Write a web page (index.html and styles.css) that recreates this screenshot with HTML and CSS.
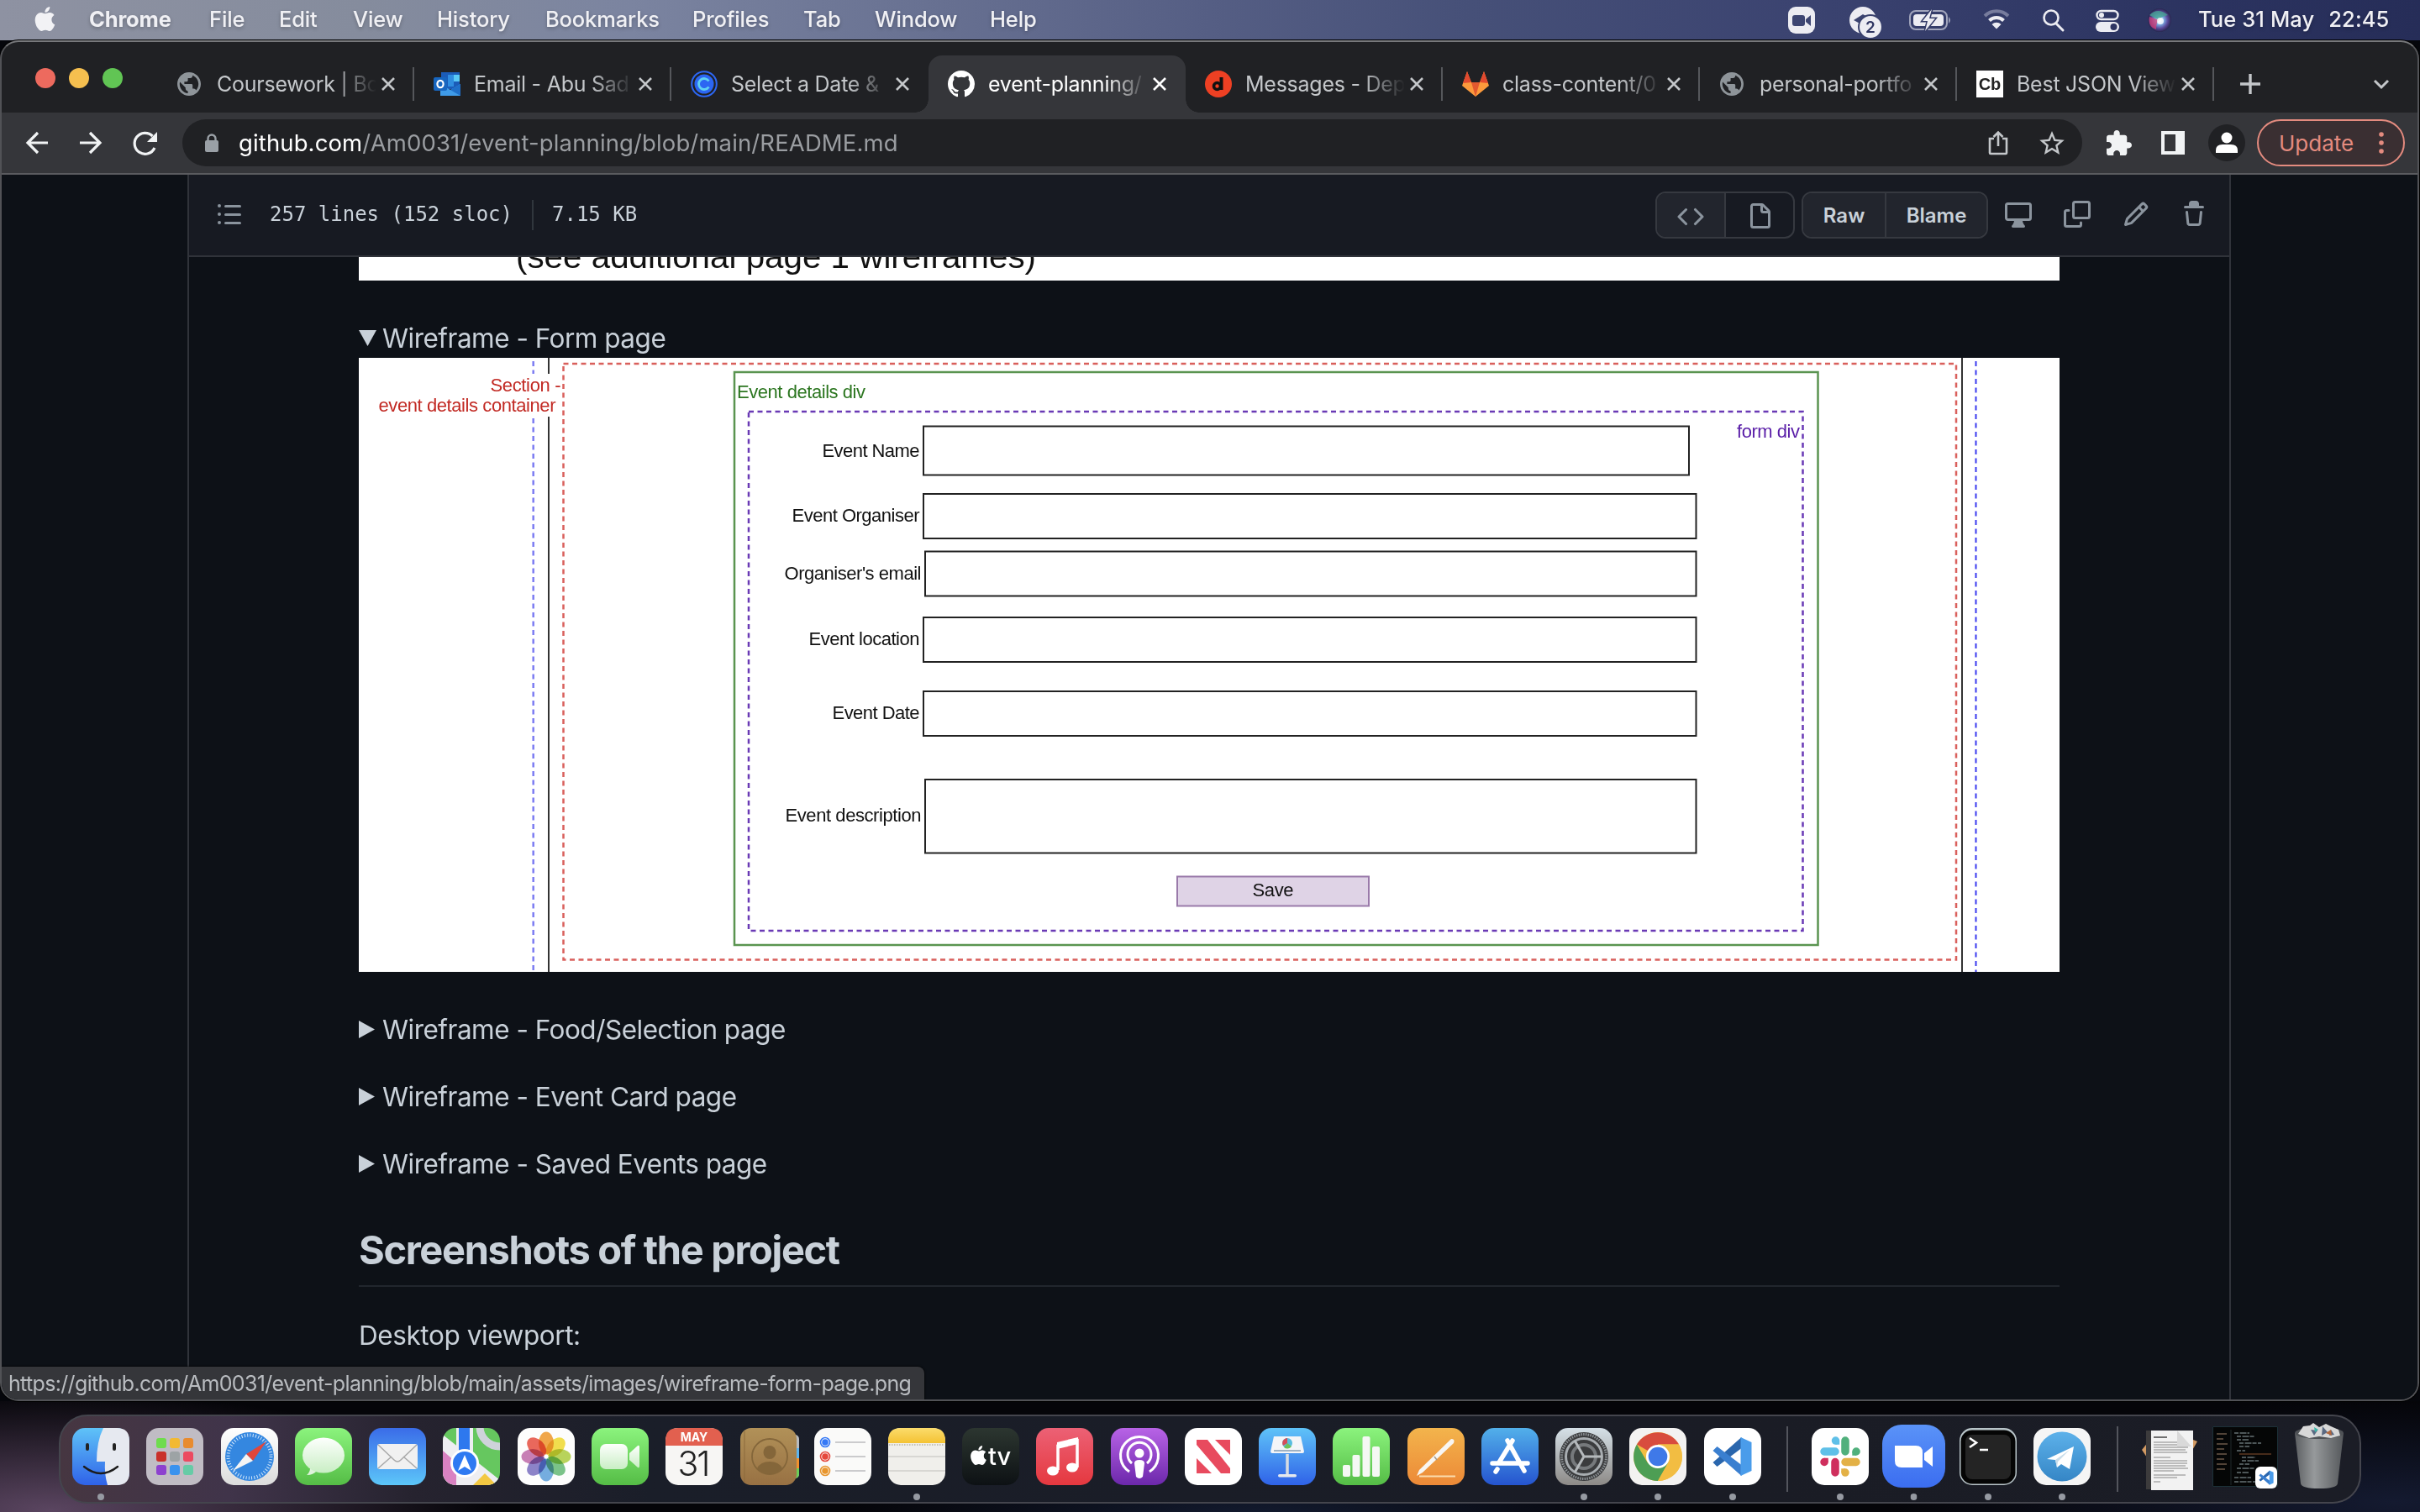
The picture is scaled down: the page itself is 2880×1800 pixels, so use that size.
FILE: index.html
```html
<!DOCTYPE html>
<html lang="en">
<head>
<meta charset="utf-8">
<title>event-planning/README.md</title>
<link rel="stylesheet" href="styles.css">
</head>
<body>
<svg width="0" height="0" class="defs">
  <defs>
    <linearGradient id="green" x2="0" y2="1"><stop stop-color="#8bf37d"/><stop offset="1" stop-color="#55bd46"/></linearGradient>
    <linearGradient id="mail" x2="0" y2="1"><stop stop-color="#3a6ce8"/><stop offset="1" stop-color="#5cc6f9"/></linearGradient>
    <linearGradient id="sky" x2="0" y2="1"><stop stop-color="#5fc3f8"/><stop offset="1" stop-color="#2f62e8"/></linearGradient>
    <linearGradient id="store" x2="0" y2="1"><stop stop-color="#52b0ea"/><stop offset="1" stop-color="#2554cf"/></linearGradient>
    <linearGradient id="paper" x2="0" y2="1"><stop stop-color="#fff"/><stop offset="1" stop-color="#dcdcdc"/></linearGradient>
    <linearGradient id="bubble" x2="0" y2="1"><stop stop-color="#fdfffd"/><stop offset="1" stop-color="#c9eec4"/></linearGradient>
    <linearGradient id="music" x2="0" y2="1"><stop stop-color="#ec6175"/><stop offset="1" stop-color="#e5383f"/></linearGradient>
    <linearGradient id="pod" x2="0" y2="1"><stop stop-color="#b863e6"/><stop offset="1" stop-color="#6c28ab"/></linearGradient>
    <linearGradient id="page" x2="0" y2="1"><stop stop-color="#f3b44c"/><stop offset="1" stop-color="#ec8937"/></linearGradient>
    <linearGradient id="book" x2="0" y2="1"><stop stop-color="#b19158"/><stop offset="1" stop-color="#987143"/></linearGradient>
    <linearGradient id="gearbg" x2="0" y2="1"><stop stop-color="#d5e0e7"/><stop offset="1" stop-color="#8d8a87"/></linearGradient>
    <linearGradient id="tvbg" x2="0" y2="1"><stop stop-color="#2c3630"/><stop offset="1" stop-color="#0d1114"/></linearGradient>
    <linearGradient id="zoombg" x2="0" y2="1"><stop stop-color="#5a93f8"/><stop offset="1" stop-color="#3b6df0"/></linearGradient>
    <linearGradient id="tele" x2="0" y2="1"><stop stop-color="#5db1ea"/><stop offset="1" stop-color="#3586c6"/></linearGradient>
    <linearGradient id="notes" x2="0" y2="1"><stop stop-color="#fbdc6c"/><stop offset="1" stop-color="#f4c233"/></linearGradient>
    <linearGradient id="bin"><stop stop-color="#5c5f62"/><stop offset=".4" stop-color="#96999b"/><stop offset="1" stop-color="#55585b"/></linearGradient>
    <radialGradient id="siri"><stop stop-color="#fff"/><stop offset=".35" stop-color="#7fb4e8"/><stop offset=".7" stop-color="#5a4a9a"/><stop offset="1" stop-color="#28264f"/></radialGradient>
    <symbol id="apple" viewBox="0 0 24 24"><path d="M12.152 6.896c-.948 0-2.415-1.078-3.96-1.04-2.04.027-3.91 1.183-4.961 3.014-2.117 3.675-.546 9.103 1.519 12.09 1.013 1.454 2.208 3.09 3.792 3.039 1.52-.065 2.09-.987 3.935-.987 1.831 0 2.35.987 3.96.948 1.637-.026 2.676-1.48 3.676-2.948 1.156-1.688 1.636-3.325 1.662-3.415-.039-.013-3.182-1.221-3.22-4.857-.026-3.04 2.48-4.494 2.597-4.559-1.429-2.09-3.623-2.324-4.39-2.376-2-.156-3.675 1.09-4.61 1.09zM15.53 3.83c.843-1.012 1.4-2.427 1.245-3.83-1.207.052-2.662.805-3.532 1.818-.78.896-1.454 2.338-1.273 3.714 1.338.104 2.715-.688 3.559-1.701"/></symbol>
    <symbol id="globe" viewBox="2 2 20 20"><path fill="#8e9499" d="M12 2C6.48 2 2 6.48 2 12s4.48 10 10 10 10-4.48 10-10S17.52 2 12 2zm-1 17.93c-3.95-.49-7-3.85-7-7.93 0-.62.08-1.21.21-1.79L9 15v1c0 1.1.9 2 2 2v1.93zm6.9-2.54c-.26-.81-1-1.39-1.9-1.39h-1v-3c0-.55-.45-1-1-1H8v-2h2c.55 0 1-.45 1-1V7h2c1.1 0 2-.9 2-2v-.41c2.93 1.19 5 4.06 5 7.41 0 2.08-.8 3.97-2.1 5.39z"/></symbol>
    <symbol id="x" viewBox="0 0 18 18"><path d="M2 2l14 14M16 2L2 16" stroke="currentColor" stroke-width="2.6" fill="none"/></symbol>
    <symbol id="vs" viewBox="0 0 48 48"><path d="M1 31l5 5 29-22V1z" fill="#2a66ad"/><path d="M1 17l5-5 29 22v13z" fill="#3a7fd0"/><path d="M34 1l13 6v34l-13 6z" fill="#4a9cea"/></symbol>
    <symbol id="dot" viewBox="0 0 8 8"><circle cx="4" cy="4" r="4" fill="#969aa2"/></symbol>
  </defs>
</svg>

<header class="menubar">
  <svg class="apple" fill="#f2f2f5"><use href="#apple"/></svg>
  <nav class="menus">
    <span class="app">Chrome</span><span>File</span><span>Edit</span><span>View</span><span>History</span><span>Bookmarks</span><span>Profiles</span><span>Tab</span><span>Window</span><span>Help</span>
  </nav>
  <svg class="tray" viewBox="2110 0 490 48" fill="#ececf2">
    <rect x="2128" y="8" width="32" height="32" rx="9"/><rect x="2133" y="18" width="15" height="13" rx="3" fill="#3d4572"/><path d="M2149 23l6-5v13l-6-5z" fill="#3d4572"/>
    <circle cx="2217" cy="24" r="16"/><path d="M2206 24l11-7 14 8-14 5z" fill="#3b4370"/><circle cx="2226" cy="32" r="14" stroke="#38406d" stroke-width="2"/><text x="2226" y="39" text-anchor="middle" class="badge">2</text>
    <rect x="2273" y="13" width="44" height="22" rx="7" fill="none" stroke="#a0a4bb" stroke-width="2"/><rect x="2277" y="17" width="36" height="14" rx="4"/><path d="M2319 20q4 4 0 8z" fill="#a0a4bb"/><path d="M2299 11l-11 14h6l-3 12 12-15h-7z" stroke="#353c69" stroke-width="3" paint-order="stroke"/>
    <g fill="none" stroke="#ececf2" stroke-width="4"><path d="M2362 19a20 20 0 0128 0" stroke="#777c9d"/><path d="M2367.500 24.500a12 12 0 0117 0"/></g><path d="M2370.500 29a8 8 0 0111 0l-5.500 5.500z"/>
    <circle cx="2441" cy="21" r="8.500" fill="none" stroke="#ececf2" stroke-width="2.600"/><path d="M2447 28l8 8" stroke="#ececf2" stroke-width="3" stroke-linecap="round"/>
    <rect x="2495.500" y="13" width="25" height="10" rx="5" fill="none" stroke="#ececf2" stroke-width="2.400"/><circle cx="2501" cy="18" r="3"/><rect x="2494" y="26" width="28" height="12" rx="6"/><circle cx="2515.500" cy="32" r="4" fill="#2e3562"/>
    <circle cx="2570" cy="24" r="14" fill="url(#siri)"/><path d="M2558 18q10-10 22 0-10 2-10 6z" fill="#45a392" opacity=".8"/><path d="M2558 20q-2 12 8 15 0-10 4-11z" fill="#d23f77" opacity=".75"/><circle cx="2571" cy="25" r="4" fill="#fff" opacity=".8"/>
  </svg>
  <div class="clock"><span>Tue 31 May</span><span>22:45</span></div>
</header>

<main class="window">
  <div class="tabstrip">
    <div class="lights"><i class="red"></i><i class="amber"></i><i class="lime"></i></div>
    <div class="tab"><svg class="fav"><use href="#globe" x="1" y="2" width="28" height="28"/></svg><span class="title">Coursework | Bo</span><svg class="close"><use href="#x"/></svg></div>
    <div class="tab"><svg class="fav" viewBox="0 0 32 32"><path d="M9 2h22v20H9z" fill="#1b5cb8"/><path d="M17 5h7v7h-7zM17 12h7v7h-7z" fill="#2f8de0"/><path d="M24 5h7v8h-7z" fill="#59c9f5"/><path d="M8 16l12 7 12-7v14H8z" fill="#3f9be8"/><path d="M32 16v14L20 23z" fill="#1f6fc8"/><rect y="8" width="16" height="16" rx="2" fill="#1766c0"/><ellipse cx="8" cy="16" rx="3.600" ry="4.200" fill="none" stroke="#fff" stroke-width="2.200"/></svg><span class="title">Email - Abu Sad</span><svg class="close"><use href="#x"/></svg></div>
    <div class="tab last"><svg class="fav" viewBox="0 0 32 32"><circle cx="16" cy="16" r="14.800" fill="none" stroke="#2c66f2" stroke-width="2"/><circle cx="16" cy="16" r="11.500" fill="#2c66f2"/><path d="M21.500 12.500a6.500 6.500 0 100 7" stroke="#5fd0f2" stroke-width="2.800" fill="none"/></svg><span class="title">Select a Date &amp;</span><svg class="close"><use href="#x"/></svg></div>
    <div class="tab active"><svg class="fav" viewBox="0 0 16 16"><path fill="#fff" d="M8 0C3.580 0 0 3.580 0 8c0 3.540 2.290 6.530 5.470 7.590.4.070.55-.17.55-.38 0-.19-.01-.82-.01-1.490-2.010.37-2.530-.49-2.690-.94-.09-.23-.48-.94-.82-1.130-.28-.15-.68-.52-.01-.53.63-.01 1.080.58 1.230.82.72 1.210 1.870.87 2.330.66.070-.52.280-.87.510-1.070-1.780-.2-3.640-.89-3.640-3.950 0-.87.310-1.590.82-2.150-.08-.2-.36-1.020.08-2.120 0 0 .67-.21 2.200.82.640-.18 1.320-.27 2-.27.68 0 1.360.09 2 .27 1.530-1.040 2.200-.82 2.200-.82.440 1.100.160 1.920.080 2.120.510.560.82 1.270.82 2.150 0 3.070-1.870 3.750-3.650 3.950.290.250.540.730.540 1.480 0 1.070-.01 1.930-.01 2.200 0 .210.150.460.550.380A8.013 8.013 0 0016 8c0-4.420-3.580-8-8-8z"/></svg><span class="title">event-planning/</span><svg class="close"><use href="#x"/></svg></div>
    <div class="tab"><svg class="fav" viewBox="0 0 32 32"><circle cx="16" cy="16" r="16" fill="#ee4023"/><circle cx="14.500" cy="18.500" r="4" fill="none" stroke="#111" stroke-width="3.600"/><path d="M19.500 8v15" stroke="#111" stroke-width="4"/></svg><span class="title">Messages - Dep</span><svg class="close"><use href="#x"/></svg></div>
    <div class="tab"><svg class="fav" viewBox="0 0 32 32"><path d="M16 31L0 18 6 1l5 13h10l5-13 6 17z" fill="#fc9a3c"/><path d="M1 15L6 1l5 13zM31 15L26 1l-5 13z" fill="#e2492f"/><path d="M11 14h10l-5 17z" fill="#e2592f"/></svg><span class="title">class-content/0</span><svg class="close"><use href="#x"/></svg></div>
    <div class="tab"><svg class="fav"><use href="#globe" x="1" y="2" width="28" height="28"/></svg><span class="title">personal-portfo</span><svg class="close"><use href="#x"/></svg></div>
    <div class="tab"><svg class="fav" viewBox="0 0 32 32"><path d="M0 0h32v32H0z" fill="#fff"/><text x="16" y="23" text-anchor="middle" class="cb">Cb</text></svg><span class="title">Best JSON View</span><svg class="close"><use href="#x"/></svg></div>
    <svg class="plus" viewBox="0 0 26 26"><path d="M13 1v24M1 13h24" stroke="#c4c7ca" stroke-width="3.400"/></svg>
    <svg class="chev" viewBox="0 0 20 14"><path d="M2 2l8 8 8-8" stroke="#c4c7ca" stroke-width="3" fill="none"/></svg>
  </div>

  <div class="toolbar">
    <svg class="navs" viewBox="20 142 180 56" fill="none" stroke="#f1f3f4" stroke-width="3.200"><path d="M57 170H33m12-12l-12 12 12 12M95 170h24m-12-12l12 12-12 12"/><path d="M184 176a12.500 12.500 0 11-2.500-14"/><path d="M187 157v12h-12z" fill="#f1f3f4" stroke="none"/></svg>
    <div class="omni">
      <svg class="lock" viewBox="0 0 16 22"><rect y="8" width="16" height="14" rx="2" fill="#9aa0a6"/><path d="M3.500 9V6a4.500 4.500 0 019 0v3" fill="none" stroke="#9aa0a6" stroke-width="2.400"/></svg>
      <span class="url"><b>github.com</b>/Am0031/event-planning/blob/main/README.md</span>
      <svg class="share" viewBox="0 0 24 30" fill="none" stroke="#c4c7ca" stroke-width="2.600"><path d="M7 10H2v17q0 1 1 1h18q1 0 1-1V10h-5M12 19V3M6.500 8L12 2.500 17.500 8"/></svg>
      <svg class="star" viewBox="2 2 20 19"><path fill="#c4c7ca" d="M22 9.240l-7.190-.62L12 2 9.190 8.630 2 9.240l5.460 4.730L5.820 21 12 17.270 18.180 21l-1.630-7.030L22 9.240zM12 15.400l-3.760 2.270 1-4.280-3.320-2.880 4.380-.38L12 6.100l1.710 4.040 4.380.38-3.320 2.880 1 4.280L12 15.400z"/></svg>
    </div>
    <svg class="ext" viewBox="2 1 21 21"><path fill="#f1f3f4" d="M20.500 11H19V7c0-1.100-.9-2-2-2h-4V3.500C13 2.120 11.880 1 10.500 1S8 2.120 8 3.500V5H4c-1.100 0-1.990.9-1.990 2v3.800H3.500c1.490 0 2.700 1.210 2.700 2.700s-1.210 2.700-2.700 2.700H2V20c0 1.100.9 2 2 2h3.800v-1.500c0-1.490 1.210-2.700 2.700-2.700 1.490 0 2.700 1.210 2.700 2.700V22H17c1.100 0 2-.9 2-2v-4h1.500c1.380 0 2.500-1.120 2.500-2.500S21.880 11 20.500 11z"/></svg>
    <svg class="side" viewBox="0 0 28 28"><path fill="#f1f3f4" fill-rule="evenodd" d="M0 0h28v28H0zM4 4v20h13V4z"/></svg>
    <svg class="me" viewBox="0 0 44 44"><circle cx="22" cy="22" r="22" fill="#202124"/><circle cx="22" cy="16" r="6.500" fill="#fff"/><path d="M9 34v-3q0-7 8-7h10q8 0 8 7v3z" fill="#fff"/></svg>
    <div class="update"><span>Update</span><svg viewBox="0 0 6 28" fill="#e48b7f"><circle cx="3" cy="4" r="2.800"/><circle cx="3" cy="14" r="2.800"/><circle cx="3" cy="24" r="2.800"/></svg></div>
  </div>

  <div class="viewport">
    <section class="filebox">
      <div class="filehead">
        <svg class="oct list" viewBox="0 0 16 16"><path d="M2 4a1 1 0 100-2 1 1 0 000 2zm3.750-1.500a.75.75 0 000 1.500h8.500a.75.75 0 000-1.500h-8.500zm0 5a.75.75 0 000 1.500h8.500a.75.75 0 000-1.500h-8.500zm0 5a.75.75 0 000 1.500h8.500a.75.75 0 000-1.500h-8.500zM3 8a1 1 0 11-2 0 1 1 0 012 0zm-1 6a1 1 0 100-2 1 1 0 000 2z"/></svg>
        <div class="meta"><span>257 lines (152 sloc)</span><i></i><span>7.15 KB</span></div>
        <div class="btns view"><span class="on"><svg class="oct" viewBox="0 0 16 16"><path d="M4.720 3.220a.75.75 0 011.060 1.060L2.060 8l3.720 3.720a.75.75 0 11-1.060 1.060L.47 8.530a.75.75 0 010-1.060l4.250-4.250zm6.560 0a.75.75 0 10-1.060 1.060L13.940 8l-3.720 3.720a.75.75 0 101.060 1.060l4.250-4.250a.75.75 0 000-1.060l-4.250-4.250z"/></svg></span><span><svg class="oct" viewBox="0 0 16 16"><path d="M3.750 1.500a.25.25 0 00-.25.25v11.500c0 .138.112.25.25.25h8.500a.25.25 0 00.25-.25V6H9.750A1.750 1.750 0 018 4.250V1.500H3.750zm5.750.56v2.190c0 .138.112.25.25.25h2.190L9.500 2.060zM2 1.750C2 .784 2.784 0 3.750 0h5.086c.464 0 .909.184 1.237.513l3.414 3.414c.329.328.513.773.513 1.237v8.086A1.750 1.750 0 0112.250 15h-8.500A1.750 1.750 0 012 13.250V1.750z"/></svg></span></div>
        <div class="btns raw"><span>Raw</span><span>Blame</span></div>
        <div class="acts">
          <svg class="oct" viewBox="0 0 16 16"><path d="M1.750 2.500h12.500a.25.25 0 01.25.25v7.500a.25.25 0 01-.25.25H1.750a.25.25 0 01-.25-.25v-7.500a.25.25 0 01.25-.25zM14.250 1H1.750A1.750 1.750 0 000 2.750v7.500C0 11.216.784 12 1.750 12h3.727c-.1 1.041-.52 1.872-1.292 2.757A.75.75 0 004.750 16h6.500a.75.75 0 00.565-1.243c-.772-.885-1.193-1.716-1.292-2.757h3.727A1.750 1.750 0 0016 10.250v-7.500A1.750 1.750 0 0014.250 1zM9.018 12H6.982a5.720 5.720 0 01-.765 2.500h3.566a5.720 5.720 0 01-.765-2.500z"/></svg>
          <svg class="oct" viewBox="0 0 16 16"><g fill="none" stroke="#8b949e" stroke-width="1.500" stroke-linecap="round"><rect x="5.750" y=".75" width="9.500" height="9.500" rx="1"/><path d="M3 5.750H1.750a1 1 0 00-1 1v7.500a1 1 0 001 1h7.500a1 1 0 001-1V13"/></g></svg>
          <svg class="oct" viewBox="0 0 16 16"><path d="M11.013 1.427a1.750 1.750 0 012.474 0l1.086 1.086a1.750 1.750 0 010 2.474l-8.610 8.610c-.21.21-.47.364-.756.445l-3.251.93a.75.75 0 01-.927-.928l.929-3.250a1.750 1.750 0 01.445-.758l8.610-8.610zm1.414 1.060a.25.25 0 00-.354 0L10.811 3.750l1.439 1.440 1.263-1.263a.25.25 0 000-.354l-1.086-1.086zM11.189 6.250L9.750 4.810l-6.286 6.287a.25.25 0 00-.064.108l-.558 1.953 1.953-.558a.249.249 0 00.108-.064l6.286-6.286z"/></svg>
          <svg class="oct" viewBox="0 0 16 16"><path d="M6.500 1.750a.25.25 0 01.25-.25h2.500a.25.25 0 01.25.25V3h-3V1.750zm4.500 0V3h2.250a.75.75 0 010 1.500H2.750a.75.75 0 010-1.500H5V1.750C5 .784 5.784 0 6.750 0h2.500C10.216 0 11 .784 11 1.750zM4.496 6.675a.75.75 0 10-1.492.15l.66 6.600A1.750 1.750 0 005.405 15h5.190c.9 0 1.652-.681 1.741-1.576l.66-6.600a.75.75 0 00-1.492-.149l-.66 6.600a.25.25 0 01-.249.225h-5.190a.25.25 0 01-.249-.225l-.66-6.600z"/></svg>
        </div>
      </div>
      <article class="readme">
        <svg class="strip" viewBox="427 306 2024 28"><text x="614" y="319" font-size="39" textLength="619" lengthAdjust="spacingAndGlyphs" fill="#111">(see additional page 1 wireframes)</text></svg>
        <div class="summary open"><svg viewBox="0 0 21 19"><path d="M0 0h21L10.500 19z"/></svg><span>Wireframe - Form page</span></div>
        <svg class="wire" viewBox="427 426 2024 731" font-size="22">
          <g fill="none" stroke-width="2">
            <path d="M634.700 430V445M634.700 498V1157" stroke="#7d7df2" stroke-width="2.500" stroke-dasharray="6 4.500"/>
            <path d="M2351.500 430V1157" stroke="#3a3af0" stroke-dasharray="6 4.500"/>
            <path d="M653 426V445M653 496V1157M2335 426V1157" stroke="#333"/>
            <rect x="670.500" y="433" width="1657.500" height="709.500" stroke="#d9605c" stroke-width="2.500" stroke-dasharray="6 4.500"/>
            <rect x="874" y="443" width="1289.500" height="682" stroke="#5a9450" stroke-width="2.500"/>
            <rect x="891" y="490" width="1254.500" height="618" stroke="#6a3ab5" stroke-width="2.500" stroke-dasharray="6 4.500"/>
            <g stroke="#222"><rect x="1099" y="507.500" width="911" height="58"/><rect x="1099" y="588" width="919.500" height="53"/><rect x="1101" y="656.500" width="917.500" height="53"/><rect x="1099" y="735" width="919.500" height="53"/><rect x="1099" y="823" width="919.500" height="53"/><rect x="1101" y="928" width="917.500" height="87.500"/></g>
            <rect x="1401" y="1043.500" width="228" height="35" fill="#dfd3e6" stroke="#9a7aaa"/>
          </g>
          <g fill="#c22a24"><text x="583.500" y="465.500" textLength="84">Section -</text><text x="450.500" y="489.500" textLength="211">event details container</text></g>
          <text x="877" y="474" textLength="153" fill="#2c7620">Event details div</text>
          <text x="2067" y="521" textLength="75" fill="#5a1ea8">form div</text>
          <g fill="#111"><text x="978.500" y="544" textLength="116">Event Name</text><text x="942.500" y="621" textLength="152">Event Organiser</text><text x="933.500" y="689.500" textLength="163">Organiser's email</text><text x="962.500" y="768" textLength="132">Event location</text><text x="990.500" y="855.500" textLength="104">Event Date</text><text x="934.500" y="978" textLength="162">Event description</text><text x="1490.500" y="1067" textLength="49">Save</text></g>
        </svg>
        <div class="summary first"><svg viewBox="0 0 19 21"><path d="M0 0v21l19-10.500z"/></svg><span>Wireframe - Food/Selection page</span></div>
        <div class="summary"><svg viewBox="0 0 19 21"><path d="M0 0v21l19-10.500z"/></svg><span>Wireframe - Event Card page</span></div>
        <div class="summary"><svg viewBox="0 0 19 21"><path d="M0 0v21l19-10.500z"/></svg><span>Wireframe - Saved Events page</span></div>
        <h2>Screenshots of the project</h2>
        <p>Desktop viewport:</p>
      </article>
    </section>
    <div class="status">https://github.com/Am0031/event-planning/blob/main/assets/images/wireframe-form-page.png</div>
  </div>
</main>

<footer class="desk">
  <div class="dock">
    <div class="apps">
      <svg viewBox="0 0 68 68"><rect width="68" height="68" rx="15" fill="url(#sky)"/><path d="M37 0h16q15 0 15 15v38q0 15-15 15H42q-4-13-3-28h-10Q29 16 37 0z" fill="#e6e9f0"/><path d="M18 20v5M50 20v5" stroke="#222" stroke-width="4" stroke-linecap="round"/><path d="M14 46q20 16 40 0" stroke="#1c1c1c" stroke-width="2.400" fill="none" stroke-linecap="round"/><use href="#dot" x="30" y="78" width="8" height="8"/></svg>
      <svg viewBox="0 0 68 68"><rect width="68" height="68" rx="15" fill="#c0bcc4"/><rect x="12" y="12" width="12" height="12" rx="3" fill="#6fdc4e"/><rect x="28" y="12" width="12" height="12" rx="3" fill="#f2b932"/><rect x="44" y="12" width="12" height="12" rx="3" fill="#e88b2f"/><rect x="12" y="28" width="12" height="12" rx="3" fill="#c9302a"/><rect x="28" y="28" width="12" height="12" rx="3" fill="#9da3a5"/><rect x="44" y="28" width="12" height="12" rx="3" fill="#ec4a60"/><rect x="12" y="44" width="12" height="12" rx="3" fill="#8d41cf"/><rect x="28" y="44" width="12" height="12" rx="3" fill="#3a92ee"/><rect x="44" y="44" width="12" height="12" rx="3" fill="#66cba6"/></svg>
      <svg viewBox="0 0 68 68"><rect width="68" height="68" rx="15" fill="url(#paper)"/><circle cx="34" cy="34" r="29" fill="#3487e0"/><circle cx="34" cy="34" r="25.500" fill="none" stroke="#d3e7fb" stroke-width="4" stroke-dasharray="1 2.330"/><path d="M54 16L38 39l-8-8z" fill="#e0463c"/><path d="M14 51l16-20 8 8z" fill="#f4f4f4"/></svg>
      <svg viewBox="0 0 68 68"><rect width="68" height="68" rx="15" fill="url(#green)"/><path d="M18 45q1 7-4 11 8 0 12-5z" fill="#dff3dc"/><ellipse cx="34" cy="32.500" rx="25" ry="21" fill="url(#bubble)"/></svg>
      <svg viewBox="0 0 68 68"><rect width="68" height="68" rx="15" fill="url(#mail)"/><rect x="10" y="19" width="48" height="30" rx="3" fill="#f1f1f1"/><path d="M11 20l19 18q4 4 8 0l19-18M11 48l16-14M57 48L41 34" fill="none" stroke="#a9a9a9" stroke-width="1.500"/></svg>
      <svg viewBox="0 0 68 68"><clipPath id="c"><rect width="68" height="68" rx="15"/></clipPath><g clip-path="url(#c)"><path d="M0 0h68v68H0z" fill="#66c75f"/><path d="M0 8l68 54v6H0z" fill="#eeeef2"/><path d="M0 27l16 14v27H0z" fill="#d982c2"/><path d="M36 68l14-14 14 14z" fill="#f3c842"/><circle cx="68" cy="-2" r="24" fill="none" stroke="#cfd3da" stroke-width="9"/><path d="M16 0h20v30H16z" fill="#eeeef2"/><path d="M19 0h13v30H19z" fill="#2e78ee"/></g><circle cx="26" cy="42" r="17" fill="#fff"/><circle cx="26" cy="42" r="14" fill="#2f7af2"/><path d="M26 32l8 19-8-5-8 5z" fill="#fff"/></svg>
      <svg viewBox="0 0 68 68"><rect width="68" height="68" rx="15" fill="#fdfdfd"/><g opacity=".9" class="petals"><ellipse cx="34" cy="18" rx="9" ry="13.500" fill="#ef9d37"/><ellipse cx="34" cy="18" rx="9" ry="13.500" fill="#f0db3c" transform="rotate(45 34 34)"/><ellipse cx="34" cy="18" rx="9" ry="13.500" fill="#b1cf4a" transform="rotate(90 34 34)"/><ellipse cx="34" cy="18" rx="9" ry="13.500" fill="#6dbd7d" transform="rotate(135 34 34)"/><ellipse cx="34" cy="18" rx="9" ry="13.500" fill="#67a5dc" transform="rotate(180 34 34)"/><ellipse cx="34" cy="18" rx="9" ry="13.500" fill="#8076c3" transform="rotate(225 34 34)"/><ellipse cx="34" cy="18" rx="9" ry="13.500" fill="#c272ae" transform="rotate(270 34 34)"/><ellipse cx="34" cy="18" rx="9" ry="13.500" fill="#e7584b" transform="rotate(315 34 34)"/></g><circle cx="34" cy="34" r="2" fill="#fff"/></svg>
      <svg viewBox="0 0 68 68"><rect width="68" height="68" rx="15" fill="url(#green)"/><rect x="10" y="19" width="33" height="30" rx="7" fill="url(#bubble)"/><path d="M45 30l10-9q2-1 2 2v22q0 3-2 2l-10-9z" fill="url(#bubble)"/></svg>
      <svg viewBox="0 0 68 68"><rect width="68" height="68" rx="15" fill="#f7f6f4"/><path d="M0 21v-6Q0 0 15 0h38q15 0 15 15v6z" fill="#e2604f"/><text x="34" y="16" text-anchor="middle" class="mon">MAY</text><text x="33" y="57" text-anchor="middle" class="day">31</text></svg>
      <svg viewBox="0 0 72 68"><rect x="50" y="8" width="21" height="52" rx="5" fill="#b9bcc0"/><path d="M60 24h11v12H60z" fill="#5db5ef"/><path d="M60 36h11v12H60z" fill="#f0912e"/><path d="M60 48h11v6q0 6-6 6h-5z" fill="#6bce58"/><rect x="1" width="67" height="68" rx="13" fill="url(#book)"/><path d="M6 4v60" stroke="#8b6b3c"/><circle cx="36" cy="34" r="21" fill="none" stroke="#84663a" stroke-width="1.800"/><ellipse cx="36" cy="29" rx="7.500" ry="8" fill="#84663a"/><path d="M21 48q4-8 15-8t15 8q-15 14-30 0z" fill="#84663a"/></svg>
      <svg viewBox="0 0 68 68"><rect width="68" height="68" rx="15" fill="#fafaf9"/><path d="M25 17h36M25 34h36M25 51h36" stroke="#bcbcbf" stroke-width="1.500"/><g fill="none" stroke-width="1.600"><circle cx="13" cy="17" r="5.500" stroke="#3478f6"/><circle cx="13" cy="34" r="5.500" stroke="#e5483c"/><circle cx="13" cy="51" r="5.500" stroke="#e8962e"/></g><circle cx="13" cy="17" r="3.800" fill="#3478f6"/><circle cx="13" cy="34" r="3.800" fill="#e5483c"/><circle cx="13" cy="51" r="3.800" fill="#e8962e"/></svg>
      <svg viewBox="0 0 68 68"><rect width="68" height="68" rx="15" fill="#f0efeb"/><path d="M0 18v-3Q0 0 15 0h38q15 0 15 15v3z" fill="url(#notes)"/><path d="M1 20h66" stroke="#b5b1a6" stroke-width="1.500" stroke-dasharray="1.500 1.500"/><path d="M0 34h68M0 51h68" stroke="#d0cfcb" stroke-width="1.300"/><use href="#dot" x="30" y="78" width="8" height="8"/></svg>
      <svg viewBox="0 0 68 68"><rect width="68" height="68" rx="15" fill="url(#tvbg)"/><svg x="8" y="20" width="23" height="25" fill="#fff"><use href="#apple"/></svg><text x="31" y="44" class="tv">tv</text></svg>
      <svg viewBox="0 0 68 68"><rect width="68" height="68" rx="15" fill="url(#music)"/><path d="M26 50V21l23-6v32" stroke="#fff" stroke-width="3.500" fill="none"/><path d="M25 17l25-6v8l-25 6z" fill="#fff"/><ellipse cx="20" cy="51" rx="7" ry="5.500" fill="#fff"/><ellipse cx="43" cy="47" rx="7" ry="5.500" fill="#fff"/></svg>
      <svg viewBox="0 0 68 68"><rect width="68" height="68" rx="15" fill="url(#pod)"/><g fill="none" stroke="#fff" stroke-width="3"><path d="M22 52a22.500 22.500 0 1124 0"/><path d="M25 42a14 14 0 1118 0"/></g><circle cx="34" cy="30" r="5.500" fill="#fff"/><path d="M28 42q0-4 6-4t6 4l-2 16q-4 4-8 0z" fill="#fff"/></svg>
      <svg viewBox="0 0 68 68"><rect width="68" height="68" rx="15" fill="#fff"/><path d="M14 14h13l27 34v6H43L14 20z" fill="#e84a5e"/><path d="M36 14h18v18zM14 36v18h18z" fill="#e84a5e"/></svg>
      <svg viewBox="0 0 68 68"><rect width="68" height="68" rx="15" fill="url(#sky)"/><path d="M18 10h32l4 18q0 2-2 2H16q-2 0-2-2z" fill="#f4f5f8"/><path d="M18 27h32" stroke="#9fb2c4" stroke-width="2"/><circle cx="34" cy="18" r="6" fill="#58bde0"/><path d="M34 18l5 4a6 6 0 01-9 1z" fill="#6dc15a"/><path d="M34 18v-6a6 6 0 00-5 9z" fill="#d64d5a"/><path d="M34 31v25" stroke="#d7dce2" stroke-width="3.500"/><rect x="23" y="55" width="22" height="3.500" rx="1.700" fill="#e6e9ee"/></svg>
      <svg viewBox="0 0 68 68"><rect width="68" height="68" rx="15" fill="url(#green)"/><g fill="#f5f8f4"><rect x="12" y="44" width="9" height="14" rx="2"/><rect x="23.500" y="32" width="9" height="26" rx="2"/><rect x="35.500" y="10" width="9" height="48" rx="2"/><rect x="47" y="22" width="9" height="36" rx="2"/></g></svg>
      <svg viewBox="0 0 68 68"><rect width="68" height="68" rx="15" fill="url(#page)"/><path d="M52 13q5 0 3 5L18 53l-7 4 3-7z" fill="#f8f6f2"/><path d="M32 34l3 4" stroke="#a39a8c" stroke-width="1.500"/><path d="M14 57.500h43" stroke="#fbdcae" stroke-width="2"/></svg>
      <svg viewBox="0 0 68 68"><rect width="68" height="68" rx="15" fill="url(#store)"/><g stroke="#fff" stroke-width="5.500" stroke-linecap="round"><path d="M37 15L21 41M31 15l20 36M13 42h42M19 49l-2 3"/></g></svg>
      <svg viewBox="0 0 68 68"><rect width="68" height="68" rx="15" fill="url(#gearbg)"/><circle cx="34" cy="34" r="29" fill="#3b3c3e"/><circle cx="34" cy="34" r="26.500" fill="none" stroke="#8d9296" stroke-width="3" stroke-dasharray="1.500 1.300"/><circle cx="34" cy="34" r="21.500" fill="none" stroke="#a8adb1" stroke-width="3"/><circle cx="34" cy="34" r="14" fill="none" stroke="#76797c" stroke-width="4"/><path d="M34 34h21M34 34L23 15M34 34L23 53" stroke="#b5b9bc" stroke-width="3"/><use href="#dot" x="30" y="78" width="8" height="8"/></svg>
      <svg viewBox="0 0 68 68"><rect width="68" height="68" rx="15" fill="#f3f2f1"/><circle cx="34" cy="34" r="29" fill="#f2bd42"/><path d="M34 34L9 19.500A29 29 0 0159 19.500H34z" fill="#d84c3e"/><path d="M34 63A29 29 0 019 19.500L21.500 41 34 48l12.500-7z" fill="#4d9e54"/><path d="M46.500 41L34 63a29 29 0 0025-43.500H34z" fill="#f2bd42"/><circle cx="34" cy="34" r="14" fill="#fff"/><circle cx="34" cy="34" r="11.300" fill="#3f79e8"/><use href="#dot" x="30" y="78" width="8" height="8"/></svg>
      <svg viewBox="0 0 68 68"><rect width="68" height="68" rx="15" fill="#fff"/><use href="#vs" x="9" y="10" width="49" height="48"/><use href="#dot" x="30" y="78" width="8" height="8"/></svg>
    </div>
    <i class="rule"></i>
    <div class="apps second">
      <svg viewBox="0 0 68 68"><rect width="68" height="68" rx="15" fill="#fff"/><g stroke-width="9.500" stroke-linecap="round"><path d="M15 28h13M28.500 15v.1" stroke="#5fc0e8"/><path d="M40 15v13M53 28h.1" stroke="#50b07c"/><path d="M40 40.500h13M40 53v.1" stroke="#e3b146"/><path d="M28 40.500V53M15 40.500h.1" stroke="#cf2f5d"/></g><path d="M28.500 15h4.750v4.750H28.500z" fill="#5fc0e8"/><path d="M48.300 28h4.700v4.750h-4.700z" fill="#50b07c"/><path d="M35.250 48.300H40V53h-4.750z" fill="#e3b146"/><path d="M15 35.750h4.750v4.750H15z" fill="#cf2f5d"/><use href="#dot" x="30" y="78" width="8" height="8"/></svg>
      <svg class="big" viewBox="0 0 75 75"><rect width="75" height="75" rx="23" fill="url(#zoombg)"/><path d="M15 25h25q8 0 8 8v18H23q-8 0-8-8zM50 34l10-8v24l-10-8z" fill="#fff"/><use href="#dot" x="33.500" y="82" width="8" height="8"/></svg>
      <svg viewBox="0 0 68 68"><rect width="68" height="68" rx="15" fill="#b8c4c8"/><rect x="1.500" y="2.500" width="65" height="64" rx="13.500" fill="#050505"/><rect x="7" y="8" width="54" height="53" rx="8" fill="#242424"/><path d="M12 12l8 5.500-8 5.500M24 26h10" stroke="#fff" stroke-width="2.600" fill="none"/><use href="#dot" x="30" y="78" width="8" height="8"/></svg>
      <svg viewBox="0 0 68 68"><rect width="68" height="68" rx="15" fill="#f5f5f5"/><circle cx="34" cy="34" r="29.500" fill="url(#tele)"/><path d="M16 37l32-15-5 27-10-6-5 4-2-9z" fill="#fff"/><path d="M26 38l17-12-14 14-1 7z" fill="#c8dcea"/><use href="#dot" x="30" y="78" width="8" height="8"/></svg>
    </div>
    <i class="rule"></i>
    <div class="files">
      <svg class="doc" viewBox="0 0 66 72"><path d="M0 24l8-10v22zM56 10l10 4-8 14z" fill="#d29a63"/><path d="M5 1h8v70H5z" fill="#3c3b3c"/><path d="M11 1h50v71H11z" fill="#f2f2f2"/><path d="M14 9h16" stroke="#444" stroke-width="1.500"/><path d="M14 15h38M14 18h40M14 21h41M14 24h38M14 27h40M14 33h20M14 37h40M14 40h40M14 43h38M14 46h41M14 49h24M14 54h38M14 57h28M14 62h8" stroke="#aaa" stroke-width="1.300"/><path d="M42 1v19h17z" fill="#d9d9d9"/></svg>
      <svg class="shot" viewBox="0 0 78 74"><path d="M0 0h78v72H0z" fill="#050606"/><path d="M.5.5h77v71H.5z" fill="none" stroke="#1c3138"/><path d="M22 4v66" stroke="#20282b"/><path d="M5 9h12M5 15h8M5 21h13M5 27h9M5 33h12M5 39h9M5 45h12M5 51h10" stroke="#6b5848" stroke-width="1.300"/><path d="M26 8h18M29 12h22M29 16h14M32 20h26M32 24h12M29 29h10M35 37h16M35 41h20M32 45h12M29 50h22M29 55h14M26 61h20M26 66h26" stroke="#667174" stroke-width="1.300" stroke-dasharray="5 1.500 8 1"/><path d="M32 33h38" stroke="#5c3922" stroke-width="1.300"/><rect x="51" y="48" width="26" height="26" rx="6" fill="#fff"/><use href="#vs" x="55" y="52" width="18" height="18"/></svg>
      <svg class="trash" viewBox="0 0 60 78"><path d="M1 12h58l-7 60q-1 6-22 6T8 72z" fill="url(#bin)"/><ellipse cx="30" cy="12" rx="29" ry="7" fill="#4f5256"/><path d="M5 13l6-9 8-1 4-3 7 5 8-4 6 3 9 4 2 7-11 3-14-2-12 2z" fill="#d8d8d8"/><path d="M20 8l8 1-4 6zM34 4l6 7-7 4zM44 8l4 6-6 1z" fill="#5b6a82"/><path d="M24 5l5 3-4 3z" fill="#39b6a8"/><path d="M38 12l6-4 1 7z" fill="#b0653c"/></svg>
    </div>
  </div>
</footer>
</body>
</html>
```
FILE: styles.css
```css
* { box-sizing: border-box; }
body {
  margin: 0;
  width: 2880px;
  height: 1800px;
  overflow: hidden;
  display: flex;
  flex-direction: column;
  background: #05060b;
  font-family: Inter, "Liberation Sans", sans-serif;
}
svg { display: block; flex: none; }
.defs { position: absolute; }
i { display: block; flex: none; }

/* menu bar */
.menubar {
  height: 48px;
  flex: none;
  display: flex;
  align-items: center;
  padding: 0 0 3px 39px;
  background: linear-gradient(90deg, #8e92a2 0, #858c9d 430px, #7b84a0 750px, #6b7494 1050px, #555e84 1440px, #465078 1750px, #3b4370 2150px, #2d3562 2550px, #262d58 2880px);
  color: #f0f0f4;
  font-size: 25.500px;
  font-weight: 500;
  text-shadow: 0 2px 4px rgba(0, 0, 0, .25);
  white-space: nowrap;
}
.apple { width: 29px; height: 31px; margin-right: 38px; }
.menus {
  width: 2004px;
  display: grid;
  grid-template-columns: 143px 83px 88px 100px 129px 175px 132px 85px 137px auto;
  letter-spacing: -.15px;
}
.app { font-weight: 700; }
.tray { width: 490px; height: 48px; margin-top: 3px; }
.badge { font: 600 19px Inter, sans-serif; fill: #2e3562; text-shadow: none; }
.clock { display: flex; gap: 17px; margin-left: 16px; letter-spacing: .1px; }

/* browser window */
.window {
  position: relative;
  width: 2879px;
  height: 1620px;
  flex: none;
  display: flex;
  flex-direction: column;
  border: 2px solid #515256;
  border-top-color: #77787b;
  border-radius: 22px;
  box-shadow: 0 0 0 1px #000;
  background: #202124;
  overflow: hidden;
}
.tabstrip {
  height: 84px;
  flex: none;
  display: flex;
  align-items: flex-end;
  color: #c4c7ca;
  font-size: 25px;
}
.lights { width: 185px; height: 84px; padding: 31px 0 0 40px; display: flex; gap: 16px; }
.lights i { width: 24px; height: 24px; border-radius: 50%; }
.red { background: #ed6a5e; }
.amber { background: #f5bf4f; }
.lime { background: #61c554; }
.tab {
  position: relative;
  width: 306px;
  height: 68px;
  flex: none;
  display: flex;
  align-items: center;
  padding-left: 23px;
}
.tab::after {
  content: "";
  position: absolute;
  right: 0;
  top: 14px;
  width: 2px;
  height: 40px;
  background: #55575b;
}
.tab.last::after, .tab.active::after { display: none; }
.tab.active { background: #35363a; border-radius: 16px 16px 0 0; color: #fff; }
.tab.active::before {
  content: "";
  position: absolute;
  left: -16px;
  right: -16px;
  bottom: 0;
  height: 16px;
  background:
    radial-gradient(circle at 0 0, transparent 15.500px, #35363a 16px) 0 0 / 16px 16px no-repeat,
    radial-gradient(circle at 100% 0, transparent 15.500px, #35363a 16px) 100% 0 / 16px 16px no-repeat;
}
.fav { width: 32px; height: 32px; }
.title {
  width: 190px;
  margin-left: 16px;
  letter-spacing: -.25px;
  white-space: nowrap;
  -webkit-mask-image: linear-gradient(90deg, #000 140px, transparent 190px);
  mask-image: linear-gradient(90deg, #000 140px, transparent 190px);
}
.close { width: 18px; height: 18px; margin-left: 5px; }
.cb { font: 700 20px "Liberation Sans", sans-serif; fill: #222; }
.plus { width: 26px; height: 26px; margin: 0 0 21px 30px; }
.chev { width: 20px; height: 14px; margin: 0 0 26px 133px; }

.toolbar {
  height: 74px;
  flex: none;
  display: flex;
  align-items: center;
  padding-left: 18px;
  background: #35363a;
  border-bottom: 2px solid #5a5b5f;
}
.navs { width: 180px; height: 56px; }
.omni {
  width: 2261px;
  height: 56px;
  margin-left: 17px;
  display: flex;
  align-items: center;
  padding-left: 27px;
  border-radius: 28px;
  background: #202124;
}
.lock { width: 16px; height: 22px; }
.url { width: 2082px; margin-left: 24px; color: #9a9da1; font-size: 27.500px; letter-spacing: .12px; white-space: nowrap; }
.url b { font-weight: 400; color: #fff; }
.share { width: 24px; height: 30px; }
.star { width: 30px; height: 28px; margin-left: 37px; }
.ext { width: 30px; height: 30px; margin-left: 29px; }
.side { width: 28px; height: 28px; margin-left: 35px; }
.me { width: 44px; height: 44px; margin-left: 28px; }
.update {
  width: 176px;
  height: 56px;
  margin-left: 14px;
  display: flex;
  align-items: center;
  padding-left: 24px;
  border: 2px solid #e48b7f;
  border-radius: 28px;
  background: #3a2f32;
  color: #e48b7f;
  font-size: 26px;
}
.update span { width: 119px; }
.update svg { width: 6px; height: 28px; }

/* page */
.viewport { position: relative; flex: 1; overflow: hidden; background: #0d1117; color: #c9d1d9; }
.filebox {
  width: 2432px;
  height: 1460px;
  margin-left: 221px;
  border: solid #30333a;
  border-width: 0 2px;
}
.filehead {
  height: 98px;
  display: flex;
  align-items: center;
  padding: 0 0 2px 32px;
  background: #171a22;
  border-bottom: 2px solid #30333a;
}
.oct { width: 32px; height: 32px; fill: #8b949e; }
.meta {
  width: 1649px;
  margin-left: 32px;
  display: flex;
  align-items: center;
  font: 24px/36px "DejaVu Sans Mono", monospace;
  white-space: nowrap;
}
.list { margin-top: 0; }
.meta i { width: 2px; height: 36px; margin: 2px 22px 0 23px; background: #30363d; }
.btns {
  height: 56px;
  margin-top: 2px;
  display: flex;
  border: 2px solid #363940;
  border-radius: 12px;
  overflow: hidden;
  font-size: 24px;
  font-weight: 600;
}
.btns span { display: flex; align-items: center; justify-content: center; background: #22252d; }
.btns span + span { border-left: 2px solid #363940; }
.view { width: 166px; }
.view span { width: 81px; padding-top: 4px; }
.view span + span { width: 83px; padding-left: 1px; background: none; }
.raw { width: 222px; margin-left: 8px; }
.raw span { width: 98px; }
.raw span + span { width: 122px; }
.acts { display: flex; gap: 38px; margin: -1px 0 0 20px; }
.acts .oct:last-child { margin-left: -1px; }
.readme { padding: 0 202px; }
.strip { width: 2024px; height: 28px; background: #fff; font-family: "Liberation Sans", sans-serif; }
.wire { width: 2024px; height: 731px; background: #fff; font-family: "Liberation Sans", sans-serif; }
.summary {
  height: 48px;
  margin-bottom: 32px;
  display: flex;
  align-items: center;
  gap: 9px;
  font-size: 31.500px;
  letter-spacing: -.5px;
  white-space: nowrap;
}
.summary svg { width: 19px; height: 21px; fill: #c9d1d9; }
.summary.open { margin: 44px 0 0; gap: 7px; }
.summary.open svg { width: 21px; height: 19px; }
.summary.first { margin-top: 44px; }
.readme h2 {
  margin: 49px 0 33px;
  height: 74px;
  border-bottom: 2px solid #21262d;
  font-size: 47px;
  line-height: 60px;
  font-weight: 700;
  letter-spacing: -1.350px;
}
.readme p { margin: 0; font-size: 31.500px; line-height: 50px; letter-spacing: -.42px; }
.status {
  position: absolute;
  left: -2px;
  bottom: -2px;
  width: 1100px;
  height: 41px;
  padding-left: 10px;
  border-radius: 0 8px 0 0;
  background: #35363a;
  box-shadow: 0 0 3px #000;
  color: #b9bcc0;
  font-size: 25px;
  letter-spacing: -.66px;
  line-height: 40px;
  white-space: nowrap;
}

/* dock */
.desk {
  flex: 1;
  padding: 16px 0 0 70px;
  background:
    radial-gradient(ellipse 520px 140px at 60px 130px, #5a4560, transparent),
    radial-gradient(ellipse 500px 90px at 1500px 140px, #131b30, transparent),
    radial-gradient(ellipse 600px 120px at 2850px 120px, #141a30, transparent),
    #050509;
}
.dock {
  width: 2740px;
  height: 106px;
  display: flex;
  border: 2px solid #44454d;
  border-radius: 34px;
  background: linear-gradient(90deg, #463641 0, #40344a 200px, #26232f 420px, #1a1e29 700px, #1a1c25 2000px, #1b1d26);
}
.apps { width: 2026px; display: grid; grid-template-columns: repeat(23, 88.250px); padding: 14px 0 0 14px; }
.apps svg { width: 68px; height: 68px; overflow: visible; }
.apps svg[viewBox="0 0 72 68"] { width: 72px; }
.apps svg svg { width: 23px; height: 25px; }
.apps.second { width: 363px; grid-template-columns: repeat(4, 88px); padding-left: 28px; }
.apps .big { width: 75px; height: 75px; margin: -4px 0 0 -4px; }
.petals ellipse { mix-blend-mode: multiply; }
.rule { width: 2px; height: 78px; margin: 12px 0 0 28px; background: #53555d; }
.files { display: flex; margin-left: 28px; padding-top: 12px; }
.doc { width: 66px; height: 72px; margin-top: 4px; }
.shot { width: 78px; height: 74px; margin-left: 18px; }
.trash { width: 60px; height: 78px; margin: -4px 0 0 19px; }
.mon { font: 700 14px Inter, sans-serif; fill: #fff; }
.day { font: 300 41px Inter, sans-serif; fill: #222; letter-spacing: -2px; }
.tv { font: 500 29px Inter, sans-serif; fill: #fff; }
```
